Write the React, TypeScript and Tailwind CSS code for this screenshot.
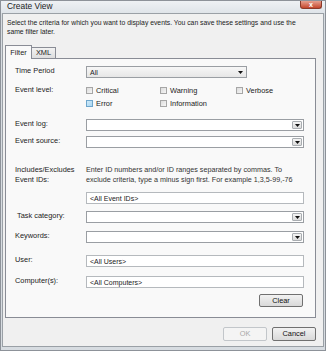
import React from "react";

const font = { fontFamily: '"Liberation Sans", Arial, sans-serif' };

function Arrow() {
  return (
    <svg width="5" height="3" viewBox="0 0 5 3" className="block">
      <path d="M0 0 H5 L2.5 3 Z" fill="#111" />
    </svg>
  );
}

function Combo({ w = "w-[218px]" }: { w?: string }) {
  return (
    <div className={`${w} h-[12px] border border-[#9a9ea3] bg-white flex justify-end items-stretch p-[1px]`}>
      <div className="w-[10px] border border-[#a9adb1] rounded-[1px] bg-gradient-to-b from-[#f4f4f4] to-[#dcdcdc] flex items-center justify-center">
        <Arrow />
      </div>
    </div>
  );
}

function TextInput({ value }: { value: string }) {
  return (
    <div className="w-[218px] h-[12px] border border-[#b5b9bd] bg-white flex items-center pl-[3px] text-[7px] text-[#222] leading-none">
      {value}
    </div>
  );
}

function Check({ label, hot = false }: { label: string; hot?: boolean }) {
  return (
    <div className="flex items-center gap-[3px]">
      <div
        className={
          hot
            ? "w-[7px] h-[7px] border border-[#6ea6cc] bg-gradient-to-br from-[#cfeaf9] to-[#a9d6f2]"
            : "w-[7px] h-[7px] border border-[#a6a6a6] bg-gradient-to-br from-[#dcdcdc] to-[#f6f6f6]"
        }
      />
      <span className="text-[7.4px] leading-none text-[#222]">{label}</span>
    </div>
  );
}

function Label({ children, className = "" }: { children?: React.ReactNode; className?: string }) {
  return (
    <div className={`w-[80px] shrink-0 pl-[9px] text-[7.4px] leading-[10px] text-[#222] ${className}`}>
      {children}
    </div>
  );
}

export default function App() {
  return (
    <div style={font} className="w-[326px] h-[351px] bg-[#d7dce1] flex flex-col overflow-hidden border border-[#8d9299]">
      {/* title bar */}
      <div className="h-[12px] shrink-0 flex items-start justify-between bg-gradient-to-b from-[#eef1f4] to-[#dfe4e9]">
        <span className="ml-[6px] text-[8.4px] leading-[10px] text-[#1a1a1a]">Create View</span>
        <div className="mr-[3px] w-[22px] h-[8px] rounded-b-[3px] bg-gradient-to-b from-[#e6a08f] to-[#c4452b] border border-[#8a3a2a] border-t-0 flex items-center justify-center">
          <span className="text-[7px] leading-none text-white font-bold">x</span>
        </div>
      </div>
      {/* client */}
      <div className="flex-1 mx-[1px] mb-[3px] border border-[#9aa0a6] bg-[#f0f0f0] flex flex-col">
        <p className="mt-[4px] ml-[4px] mr-[14px] text-[6.8px] leading-[9px] text-[#222]">
          Select the criteria for which you want to display events. You can save these settings and use the same filter later.
        </p>
        {/* tabs */}
        <div className="mt-[8px] ml-[2px] flex items-end h-[14px]">
          <div className="h-[14px] w-[27px] border border-b-0 border-[#898c95] bg-[#f9f9f9] flex items-center justify-center text-[7.4px] text-[#222] relative z-10 -mb-[1px]">
            Filter
          </div>
          <div className="h-[11px] w-[24px] border border-l-0 border-b-0 border-[#898c95] bg-gradient-to-b from-[#f2f2f2] to-[#dedede] flex items-center justify-center text-[7.4px] text-[#222]">
            XML
          </div>
        </div>
        {/* panel */}
        <div className="ml-[2px] mr-[7px] h-[260px] border border-[#898c95] bg-[#f9f9f9] flex flex-col">
          <div className="mt-[7px] flex items-start">
            <Label>Time Period</Label>
            <div className="w-[161px] h-[12px] border border-[#9a9ea3] bg-gradient-to-b from-[#f7f7f7] to-[#e6e6e6] flex items-center justify-between px-[3px]">
              <span className="text-[7px] leading-none text-[#222]">All</span>
              <Arrow />
            </div>
          </div>
          <div className="mt-[8px] flex items-start">
            <Label className="-mt-[1px]">Event level:</Label>
            <div className="flex flex-col gap-[4px]">
              <div className="flex h-[9px] items-center">
                <div className="w-[74px]"><Check label="Critical" /></div>
                <div className="w-[76px]"><Check label="Warning" /></div>
                <Check label="Verbose" />
              </div>
              <div className="flex h-[9px] items-center">
                <div className="w-[74px]"><Check label="Error" hot /></div>
                <Check label="Information" />
              </div>
            </div>
          </div>
          <div className="mt-[11px] flex items-start">
            <Label>Event log:</Label>
            <Combo />
          </div>
          <div className="mt-[5px] flex items-start">
            <Label>Event source:</Label>
            <Combo />
          </div>
          <div className="mt-[17px] flex items-start">
            <Label>
              Includes/Excludes
              <br />
              Event IDs:
            </Label>
            <div className="w-[222px] text-[7.2px] leading-[10px] text-[#333]">
              Enter ID numbers and/or ID ranges separated by commas. To exclude criteria, type a minus sign first. For example 1,3,5-99,-76
            </div>
          </div>
          <div className="mt-[7px] flex items-start">
            <Label />
            <TextInput value="<All Event IDs>" />
          </div>
          <div className="mt-[7px] flex items-start">
            <Label className="pl-[11px]">Task category:</Label>
            <Combo />
          </div>
          <div className="mt-[8px] flex items-start">
            <Label>Keywords:</Label>
            <Combo />
          </div>
          <div className="mt-[12px] flex items-start">
            <Label>User:</Label>
            <TextInput value="<All Users>" />
          </div>
          <div className="mt-[9px] flex items-start">
            <Label>Computer(s):</Label>
            <TextInput value="<All Computers>" />
          </div>
          <div className="mt-[6px] flex justify-end pr-[12px]">
            <button className="w-[44px] h-[13px] rounded-[2px] border border-[#707070] bg-gradient-to-b from-[#f2f2f2] to-[#d9d9d9] text-[7.4px] leading-none text-[#111]">
              Clear
            </button>
          </div>
        </div>
        {/* footer buttons */}
        <div className="mt-[9px] flex justify-end gap-[5px] pr-[7px]">
          <button className="w-[44px] h-[14px] rounded-[2px] border border-[#c2c6ca] bg-[#f4f4f4] text-[7.4px] leading-none text-[#a8a8a8]">
            OK
          </button>
          <button className="w-[44px] h-[14px] rounded-[2px] border border-[#707070] bg-gradient-to-b from-[#f2f2f2] to-[#d9d9d9] text-[7.4px] leading-none text-[#111]">
            Cancel
          </button>
        </div>
      </div>
    </div>
  );
}
